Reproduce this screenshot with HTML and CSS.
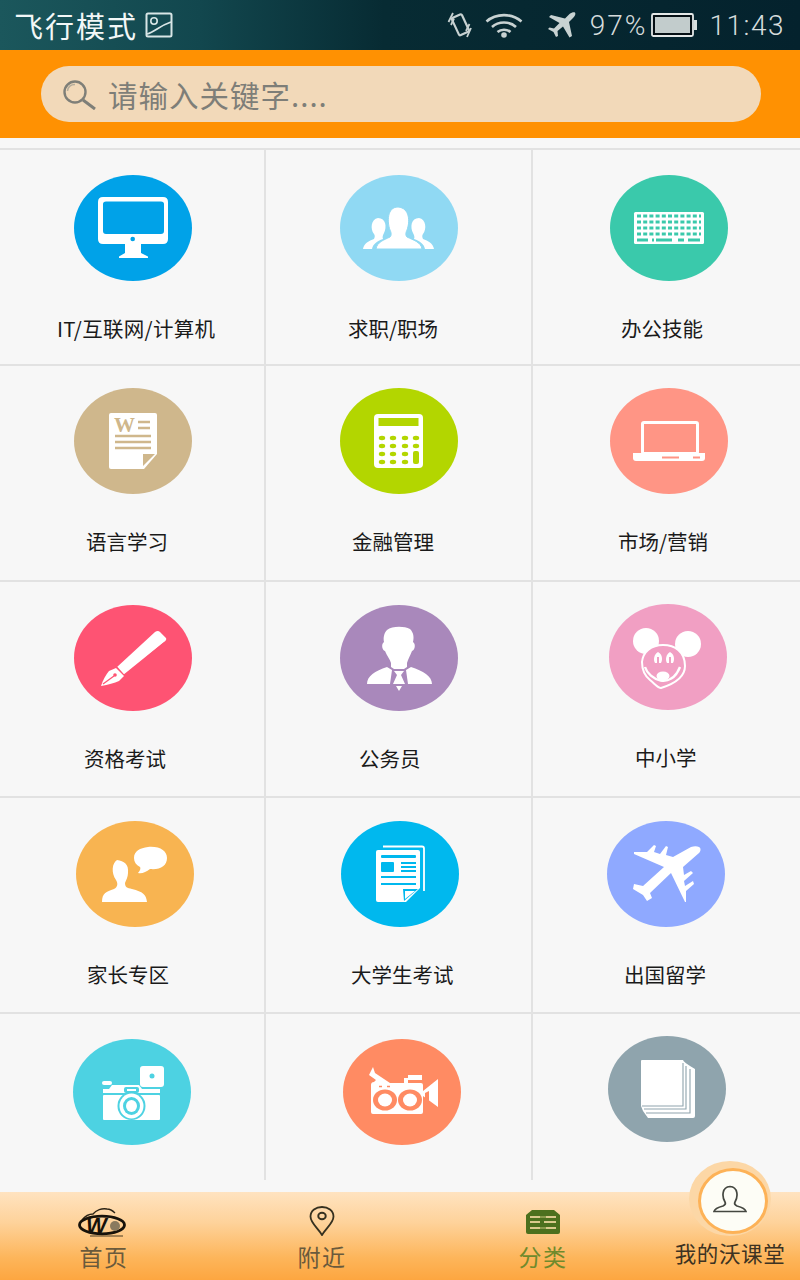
FILE: index.html
```html
<!DOCTYPE html>
<html lang="zh">
<head>
<meta charset="utf-8">
<title>分类</title>
<link rel="stylesheet" href="styles.css">
</head>
<body>
<div class="app">
  <header class="status">
    <div class="status-left">
      <span class="mode">飞行模式</span>
      <svg class="st-pic" viewBox="0 0 28 26"><rect x="1.5" y="1.5" width="25" height="23" rx="1.5" fill="none" stroke="#d8e6e6" stroke-width="2"/><circle cx="9" cy="9" r="3.2" fill="none" stroke="#d8e6e6" stroke-width="1.6"/><path d="M2 22 C10 20 14 14 26 10" fill="none" stroke="#d8e6e6" stroke-width="1.8"/></svg>
    </div>
    <div class="status-right">
      <svg class="st-vib" viewBox="0 0 26 26"><rect x="8" y="3.5" width="11" height="19" rx="1.5" transform="rotate(-25 13 13)" fill="none" stroke="#c8d2d2" stroke-width="2.200"/><path d="M1.500 10 L6 1 M4 13 L7 6.500 M24 16 L20 25 M22.500 12 L19 19" stroke="#c8d2d2" stroke-width="1.800" fill="none"/></svg>
      <svg class="st-wifi" viewBox="0 0 38 26"><path d="M1.500 9.500 C11 1 27 1 36.500 9.500 M7 15 C13.500 9 24.500 9 31 15 M12.500 20 C16 17 22 17 25.500 20" fill="none" stroke="#c8d2d2" stroke-width="2.600"/><circle cx="19" cy="23" r="2.800" fill="#c8d2d2"/></svg>
      <svg class="st-plane" viewBox="0 0 28 26"><path d="M27 .5 C28 2 27 4 25 6 L21 10 L24 24 L21.500 25.500 L15 14.500 L9.500 19 L10 24 L8 25 L5.500 20 L0 17 L1.500 15.500 L6 16.500 L11.500 11 L1 5 L3 3 L17 6.500 L21.500 2 C23.500 .5 25.500 0 27 .5 Z" fill="#c8d2d2"/></svg>
      <span class="pct">97%</span>
      <svg class="st-bat" viewBox="0 0 46 26"><rect x="1" y="2" width="41" height="22" rx="1.500" fill="#050f14" stroke="#e4e8e8" stroke-width="1.800"/><rect x="4" y="5" width="35" height="16" fill="#c2cccc"/><rect x="43" y="8" width="3" height="10" fill="#d8dede"/></svg>
      <span class="clock">11:43</span>
    </div>
  </header>

  <div class="searchbar">
    <div class="search">
      <svg class="search-ico" viewBox="0 0 34 30"><circle cx="13" cy="12" r="10.500" fill="none" stroke="#7f7f78" stroke-width="2.400"/><path d="M5.500 11 C6 7 9 4.500 13 4.500" fill="none" stroke="#b5ad9c" stroke-width="1.500"/><path d="M21 20 L33 29" stroke="#7f7f78" stroke-width="3"/></svg>
      <span class="search-text">请输入关键字....</span>
    </div>
  </div>

  <main class="grid">
    <a class="cell c1">
      <svg class="ico" viewBox="0 0 118 106"><ellipse cx="59" cy="53" rx="59" ry="53" fill="#00a2e8"/><path fill-rule="evenodd" d="M29 22 H89 Q94 22 94 27 V64 Q94 69 89 69 H29 Q24 69 24 64 V27 Q24 22 29 22 Z M32 26.500 Q29 26.500 29 29 V56 Q29 59 32 59 H87 Q90 59 90 56 V29 Q90 26.500 87 26.500 Z" fill="#fff"/><circle cx="58.700" cy="64" r="2.300" fill="#00a2e8"/><path d="M51 69 H67 V78 L74 81.500 V83 H45 V81.500 L51 78 Z" fill="#fff"/></svg>
      <span class="label wide">IT/互联网/计算机</span>
    </a>
    <a class="cell c2">
      <svg class="ico" viewBox="0 0 118 106"><ellipse cx="59" cy="53" rx="59" ry="53" fill="#90d9f3"/><path d="M23 74 C24 68 29 66 34 64 C35 62 35 60 34 59 C30 54 31 44 38 43 C46 43 47 52 44 58 C43 60 42 62 43 64 C37 66 33 69 32 74 Z M94 74 C93 68 88 66 83 64 C82 62 82 60 83 59 C87 54 86 44 79 43 C71 43 70 52 73 58 C74 60 75 62 74 64 C80 66 84 69 85 74 Z" fill="#fff"/><path d="M36 74 C37 67 44 65 50 62 C52 60 51 57 50 55 C47 47 47 32 58 32 C70 33 70 47 67 55 C66 57 65 60 67 62 C73 65 81 67 82 74 Z" fill="#fff" stroke="#90d9f3" stroke-width="1"/></svg>
      <span class="label">求职/职场</span>
    </a>
    <a class="cell c3">
      <svg class="ico" viewBox="0 0 118 106"><ellipse cx="59" cy="53" rx="59" ry="53" fill="#3ac9ab"/><rect x="24" y="37" width="70" height="32" rx="1.500" fill="#fff"/><path d="M27 41 H91 M27 47 H91 M27 53 H91 M27 59 H91" stroke="#3ac9ab" stroke-width="3" stroke-dasharray="4 2.200"/><path d="M27 65 H38 M42 65 H44 M46 65 H62 M68 65 H74 M78 65 H90" stroke="#3ac9ab" stroke-width="3"/></svg>
      <span class="label">办公技能</span>
    </a>

    <a class="cell c4">
      <svg class="ico" viewBox="0 0 118 106"><ellipse cx="59" cy="53" rx="59" ry="53" fill="#cfb78c"/><path d="M37 25 H81 Q83 25 83 27 V66 L70 81 H37 Q35 81 35 79 V27 Q35 25 37 25 Z" fill="#fff"/><text x="40" y="44" class="w">W</text><path d="M64 34 H76 M64 40 H76 M41 48 H77 M41 54 H77 M41 60 H77" stroke="#cfb78c" stroke-width="2.600"/><path d="M69 66 H81 L69 78 Z" fill="#cfb78c"/></svg>
      <span class="label">语言学习</span>
    </a>
    <a class="cell c5">
      <svg class="ico" viewBox="0 0 118 106"><ellipse cx="59" cy="53" rx="59" ry="53" fill="#b3d600"/><rect x="34" y="26" width="49" height="54" rx="4" fill="#fff"/><rect x="38.500" y="30" width="40" height="8" fill="#b3d600"/><g fill="#b3d600"><ellipse cx="42" cy="50" rx="3.200" ry="2.200"/><ellipse cx="53" cy="50" rx="3.200" ry="2.200"/><ellipse cx="65" cy="50" rx="3.200" ry="2.200"/><ellipse cx="76" cy="50" rx="3.200" ry="2.200"/><ellipse cx="42" cy="58" rx="3.200" ry="2.200"/><ellipse cx="53" cy="58" rx="3.200" ry="2.200"/><ellipse cx="65" cy="58" rx="3.200" ry="2.200"/><ellipse cx="76" cy="58" rx="3.200" ry="2.200"/><ellipse cx="42" cy="66" rx="3.200" ry="2.200"/><ellipse cx="53" cy="66" rx="3.200" ry="2.200"/><ellipse cx="65" cy="66" rx="3.200" ry="2.200"/><ellipse cx="42" cy="74" rx="3.200" ry="2.200"/><ellipse cx="53" cy="74" rx="3.200" ry="2.200"/><ellipse cx="65" cy="74" rx="3.200" ry="2.200"/><rect x="73" y="63" width="6" height="13" rx="2"/></g></svg>
      <span class="label">金融管理</span>
    </a>
    <a class="cell c6">
      <svg class="ico" viewBox="0 0 118 106"><ellipse cx="59" cy="53" rx="59" ry="53" fill="#ff9585"/><rect x="32.500" y="34.500" width="55" height="31" rx="1.500" fill="none" stroke="#fff" stroke-width="3"/><path d="M23 65 H95 V70 Q95 73 92 73 H26 Q23 73 23 70 Z" fill="#fff"/><path d="M52 69.500 H69 M83 69.500 H90" stroke="#ff9585" stroke-width="1.800"/></svg>
      <span class="label">市场/营销</span>
    </a>

    <a class="cell c7">
      <svg class="ico" viewBox="0 0 118 106"><ellipse cx="59" cy="53" rx="59" ry="53" fill="#fe5373"/><path d="M43.300 61.700 L81 27 Q84 25 86 27 L92 33 Q93 35 90 37 L50 69.300 Z" fill="#fff"/><path d="M90 38 L73 52" stroke="#fe5373" stroke-width="1.100"/><path d="M42 63 L50 71 L45 76 Q38 79 27 81 Q30 72 35 66 Z" fill="#fff"/><path d="M29 79 L40 71" stroke="#fe5373" stroke-width="1.200"/><circle cx="41" cy="70" r="1.800" fill="#fe5373"/></svg>
      <span class="label">资格考试</span>
    </a>
    <a class="cell c8">
      <svg class="ico" viewBox="0 0 118 106"><ellipse cx="59" cy="53" rx="59" ry="53" fill="#a988bb"/><path d="M47 25 C52 21 64 21 70 24 C74 28 74 33 73 37 C76 39 75 45 72 46 C70 51 68 54 67 58 V62 L64 64 H54 L51 62 V58 C50 54 47 51 45 46 C42 45 41 39 44 37 C43 33 44 28 47 25 Z" fill="#fff"/><path d="M47 62 L52 65 L50 79 H27 C27 71 35 66 47 62 Z M71 62 L66 65 L68 79 H92 C92 71 83 66 71 62 Z" fill="#fff"/><path d="M54 66 H64 L61 70 L65 79 H53 L57 70 Z M56 81 H62 L59 86 Z" fill="#fff"/></svg>
      <span class="label">公务员</span>
    </a>
    <a class="cell c9">
      <svg class="ico" viewBox="0 0 118 106"><ellipse cx="59" cy="53" rx="59" ry="53" fill="#f19fc3"/><circle cx="37" cy="37" r="13" fill="#fff"/><circle cx="79" cy="40" r="13" fill="#fff"/><path d="M33 58 C34 48 42 41 54 41 C66 41 76 48 76 62 C76 72 68 79 52 84 C49 84 46 80 41 76 C36 72 33 66 33 58 Z" fill="#f19fc3" stroke="#fff" stroke-width="2"/><path d="M49 48 C45 50 44 56 46 59 H52 C54 55 53 50 49 48 Z M61 48 C57 50 56 56 58 59 H64 C66 55 65 50 61 48 Z" fill="#fff"/><path d="M49 53 V59 M61 53 V59" stroke="#f19fc3" stroke-width="2"/><ellipse cx="54" cy="72" rx="6.500" ry="4.500" fill="#fff"/><path d="M36 63 C40 76 62 86 71 63" fill="none" stroke="#fff" stroke-width="2.400"/></svg>
      <span class="label">中小学</span>
    </a>

    <a class="cell c10">
      <svg class="ico" viewBox="0 0 118 106"><ellipse cx="59" cy="53" rx="59" ry="53" fill="#f8b451"/><path d="M26 81 C26 72 30 71 38 68 C42 66 42 62 40 59 C35 52 36 42 41 39 C48 40 53 43 52 52 C52 56 50 59 49 62 C49 66 51 67 56 68 C67 71 70 73 71 81 Z" fill="#fff"/><path d="M72 26 C84 25 91 30 91 37 C91 45 84 49 74 48 C70 51 66 53 62 52 C64 50 65 47 64 46 C60 44 58 41 58 37 C58 30 64 27 72 26 Z" fill="#fff"/></svg>
      <span class="label">家长专区</span>
    </a>
    <a class="cell c11">
      <svg class="ico" viewBox="0 0 118 106"><ellipse cx="59" cy="53" rx="59" ry="53" fill="#00b8ee"/><path d="M42 25.500 H81 Q83 25.500 83 27.500 V70" fill="none" stroke="#fff" stroke-width="1.800"/><path d="M37 29 H77 Q79 29 79 31 V67 L65 81 H37 Q35 81 35 79 V31 Q35 29 37 29 Z" fill="#fff"/><rect x="40" y="34" width="35" height="3" rx="1" fill="#00b8ee"/><rect x="40" y="41" width="13" height="10" rx="1" fill="#00b8ee"/><path d="M60 42 H75 M60 46 H75 M60 50 H75 M40 56 H75 M40 63 H75" stroke="#00b8ee" stroke-width="1.800"/><path d="M62 68 H77 L63 80 Z" fill="#00b8ee"/><path d="M64 70 H74 L64 78 Z" fill="#fff"/></svg>
      <span class="label">大学生考试</span>
    </a>
    <a class="cell c12">
      <svg class="ico" viewBox="0 0 118 106"><ellipse cx="59" cy="53" rx="59" ry="53" fill="#8fa9ff"/><path d="M92 26 C94 27 94 30 92 32 L76 46 L77 54 L84 50 L86 52 L77 60 L78 65 L86 60 L87 63 L79 70 L79 81 L78 81 L64 52 L43 72 L45 77 L40 80 L36 74 L26 68 L27 63 L36 65 L57 46 L27 33 L27 31 L40 31 L47 24 L49 25 L47 31 L53 33 L59 25 L61 26 L59 34 L66 36 L84 26 C87 25 90 25 92 26 Z" fill="#fff"/></svg>
      <span class="label">出国留学</span>
    </a>

    <a class="cell c13">
      <svg class="ico" viewBox="0 0 118 106"><ellipse cx="59" cy="53" rx="59" ry="53" fill="#4dd2e2"/><rect x="67" y="27" width="24" height="21" rx="3" fill="#fff"/><circle cx="79" cy="37" r="2.500" fill="#4dd2e2"/><rect x="29" y="42" width="10" height="4" rx="2" fill="#fff"/><path d="M30 50 H36 L39 46 H66 L69 50 H87 V54 H30 Z" fill="#fff"/><rect x="51" y="48" width="15" height="6" rx="2" fill="#4dd2e2"/><rect x="54" y="50" width="9" height="2" fill="#fff"/><rect x="30" y="56" width="57" height="25" rx="1" fill="#fff"/><ellipse cx="58.500" cy="67" rx="14" ry="14" fill="#4dd2e2"/><ellipse cx="58.500" cy="67" rx="12" ry="12.500" fill="#fff"/><ellipse cx="58.500" cy="67" rx="8.500" ry="9" fill="#4dd2e2"/><ellipse cx="58.500" cy="67" rx="5.500" ry="6" fill="#fff"/></svg>
    </a>
    <a class="cell c14">
      <svg class="ico" viewBox="0 0 118 106"><ellipse cx="59" cy="53" rx="59" ry="53" fill="#ff8b63"/><path d="M26 36 L30 28 L32 34 L47 44 H61 V39 H65 V36 H79 V41 H65 V44 H78 Q80 44 80 46 V52 L95 40 V68 L80 57 V73 Q80 75 78 75 H30 Q28 75 28 73 V46 Q28 43 31 43 L33 41 Z" fill="#fff"/><ellipse cx="42" cy="61" rx="12" ry="10.500" fill="#ff8b63"/><ellipse cx="42" cy="61" rx="7" ry="6.500" fill="#fff"/><ellipse cx="67" cy="61" rx="12" ry="10.500" fill="#ff8b63"/><ellipse cx="67" cy="61" rx="7" ry="6.500" fill="#fff"/><path d="M36 47.500 H39 M44 47.500 H47" stroke="#ff8b63" stroke-width="1.400"/><path d="M82 54 L86 52 V65 L82 62 Z" fill="#ff8b63"/></svg>
    </a>
    <a class="cell c15">
      <svg class="ico" viewBox="0 0 118 106"><ellipse cx="59" cy="53" rx="59" ry="53" fill="#8fa4ad"/><path d="M34 24 H75 Q75 26 87 33 V80 Q87 82 85 82 H40 L35 75 L33 70 V25 Q33 24 34 24 Z" fill="#fff"/><path d="M75 27 V70 H34 M78 30 V73 H36 M82 33 V77 H38" fill="none" stroke="#8fa4ad" stroke-width="1.100"/></svg>
    </a>
  </main>

  <nav class="tabbar">
    <a class="tab t1">
      <svg class="tab-ico logo" viewBox="0 0 48 30"><path d="M4 12 C8 7 12 6 15 6 C18 2 24 0 29 1 C33 1 35 3 37 5" fill="none" stroke="#2c2416" stroke-width="1.300"/><ellipse cx="24" cy="17" rx="22.500" ry="8.800" fill="none" stroke="#17120a" stroke-width="2.800"/><path d="M12 28 H45" stroke="#4a3d25" stroke-width="1.200"/><circle cx="37" cy="18" r="5" fill="#8a7a5e"/><text x="8" y="25" class="logo-w">W</text></svg>
      <span class="tab-text">首页</span>
    </a>
    <a class="tab t2">
      <svg class="tab-ico pin" viewBox="0 0 26 30"><path d="M13 29 C9 22 1.500 17 1.500 10.500 C1.500 4.500 7 1 13 1 C19 1 24.500 4.500 24.500 10.500 C24.500 17 17 22 13 29 Z" fill="none" stroke="#35301f" stroke-width="1.800"/><ellipse cx="13" cy="10" rx="3.700" ry="3.200" fill="none" stroke="#35301f" stroke-width="2"/></svg>
      <span class="tab-text">附近</span>
    </a>
    <a class="tab t3">
      <svg class="tab-ico box" viewBox="0 0 36 26"><path d="M7 1 H29 L35 6 V23 Q35 25 33 25 H3 Q1 25 1 23 V6 Z" fill="#4c701e"/><path d="M5 8 H15 M21 8 H31 M5 13 H15 M19 13 H31 M5 19 H15 M21 19 H31" stroke="#d9c98d" stroke-width="2"/><path d="M15 8 H21 M15 19 H21" stroke="#8a9a4c" stroke-width="2"/></svg>
      <span class="tab-text active">分类</span>
    </a>
    <a class="tab t4">
      <span class="avatar">
        <svg class="avatar-ico" viewBox="0 0 34 28"><path d="M12 17 C9 12 8.500 2 17 1.500 C25.500 2 25 12 22 17 C21 19 22 20 24 21 C28 22 32 23 33 26.500 H1 C2 23 6 22 10 21 C12 20 13 19 12 17 Z" fill="none" stroke="#444740" stroke-width="1.700"/></svg>
      </span>
      <span class="tab-text me">我的沃课堂</span>
    </a>
  </nav>
</div>
</body>
</html>
```
FILE: styles.css
```css
* { box-sizing: border-box; }
html, body { margin: 0; padding: 0; }
body { font-family: "Noto Sans CJK SC", "Noto Sans", sans-serif; background: #f7f7f7; }
a { color: inherit; text-decoration: none; }
svg { display: block; flex: none; }

.app { width: 800px; height: 1280px; display: flex; flex-direction: column; overflow: hidden; }

/* status bar */
.status {
  height: 50px; flex: none; display: flex; align-items: center; justify-content: space-between;
  padding: 0 15px 0 14px;
  background: linear-gradient(90deg, #1b575c 0%, #12474e 25%, #072b33 48%, #04222d 100%);
  color: #d6dcdc;
}
.status-left { display: flex; align-items: center; gap: 7px; }
.mode { color: #f2f7f7; font-size: 29px; line-height: 50px; font-weight: 400; letter-spacing: 2px; }
.st-pic { width: 28px; height: 26px; }
.status-right { display: flex; align-items: center; font-family: Roboto, sans-serif; font-weight: 300; font-size: 28px; }
.st-vib { width: 26px; height: 26px; }
.st-wifi { width: 38px; height: 26px; margin-left: 12px; }
.st-plane { width: 28px; height: 26px; margin-left: 25px; }
.pct { margin-left: 14px; letter-spacing: 2px; }
.st-bat { width: 46px; height: 26px; margin-left: 4px; }
.clock { margin-left: 12px; letter-spacing: 1.500px; }

/* search */
.searchbar { height: 88px; flex: none; background: #ff9102; padding: 16px 39px 16px 41px; }
.search { height: 56px; border-radius: 28px; background: #f2d9b9; display: flex; align-items: center; padding-left: 21px; }
.search-ico { width: 34px; height: 30px; margin-top: 2px; }
.search-text { margin-left: 12px; font-size: 29.500px; letter-spacing: 1px; color: #7e7e78; line-height: 56px; }

/* grid */
.grid {
  flex: 1; padding-top: 10px; background: #f7f7f7;
  display: grid; grid-template-columns: 266px 267px 267px; grid-template-rows: repeat(4, 216px) 168px;
  align-content: start;
}
.cell {
  border-top: 2px solid #e2e2e2; border-right: 2px solid #e2e2e2;
  display: flex; flex-direction: column; align-items: flex-start;
  padding-top: var(--pt);
}
.cell:nth-child(3n) { border-right: 0; }
.ico { width: 118px; height: 106px; margin-left: var(--ix); }
.label {
  margin-left: var(--lx); margin-top: 35px; white-space: nowrap;
  font-size: 20.500px; line-height: 24px; color: #1a1a1a;
}
.label.wide { letter-spacing: .3px; }
.w { font-family: "Liberation Serif", serif; font-weight: 700; font-size: 21px; fill: #cfb78c; }
.logo-w { font-family: "Liberation Sans", sans-serif; font-style: italic; font-weight: 700; font-size: 22px; fill: #17120a; }

.c1  { --pt: 25px; --ix: 74px; --lx: 57px; }
.c2  { --pt: 25px; --ix: 74px; --lx: 82px; }
.c3  { --pt: 25px; --ix: 77px; --lx: 88px; }
.c4  { --pt: 22px; --ix: 74px; --lx: 86px; }
.c5  { --pt: 22px; --ix: 74px; --lx: 86px; }
.c6  { --pt: 22px; --ix: 77px; --lx: 85px; }
.c7  { --pt: 23px; --ix: 74px; --lx: 84px; }
.c8  { --pt: 23px; --ix: 74px; --lx: 93px; }
.c9  { --pt: 22px; --ix: 76px; --lx: 102px; }
.c10 { --pt: 23px; --ix: 76px; --lx: 87px; }
.c11 { --pt: 23px; --ix: 75px; --lx: 85px; }
.c12 { --pt: 23px; --ix: 74px; --lx: 91px; }
.c13 { --pt: 25px; --ix: 73px; }
.c14 { --pt: 25px; --ix: 77px; }
.c15 { --pt: 22px; --ix: 75px; }

/* bottom bar */
.tabbar {
  height: 88px; flex: none; display: flex; position: relative;
  background: linear-gradient(180deg, #ffe3c0 0%, #fed29a 35%, #fdb55a 75%, #fda640 100%);
}
.tab { display: flex; flex-direction: column; align-items: center; }
.t1 { width: 208px; }
.t2 { width: 228px; }
.t3 { width: 214px; }
.t4 { width: 150px; padding-left: 10px; }
.logo { width: 48px; height: 30px; margin: 16px 4px 3px 0; }
.pin { width: 26px; height: 30px; margin-top: 14px; margin-bottom: 5px; }
.box { width: 36px; height: 26px; margin-top: 17px; margin-bottom: 6px; }
.tab-text { font-size: 23px; line-height: 30px; letter-spacing: 1.500px; color: #6a5a3c; white-space: nowrap; }
.tab-text.active { color: #6f8a2c; }
.tab-text.me { font-size: 21.500px; letter-spacing: .6px; color: #3d3322; margin-top: 46px; line-height: 30px; }
.avatar {
  position: absolute; left: 689px; top: -31px; width: 82px; height: 75px; border-radius: 50%;
  background: #fcd7a6; display: flex; align-items: center; justify-content: center;
}
.avatar::before {
  content: ""; position: absolute; left: 9px; top: 7px; width: 64px; height: 60px; border-radius: 50%;
  background: #fdfdf6; border: 3px solid #fdb257;
}
.avatar-ico { width: 34px; height: 28px; position: relative; }
```
